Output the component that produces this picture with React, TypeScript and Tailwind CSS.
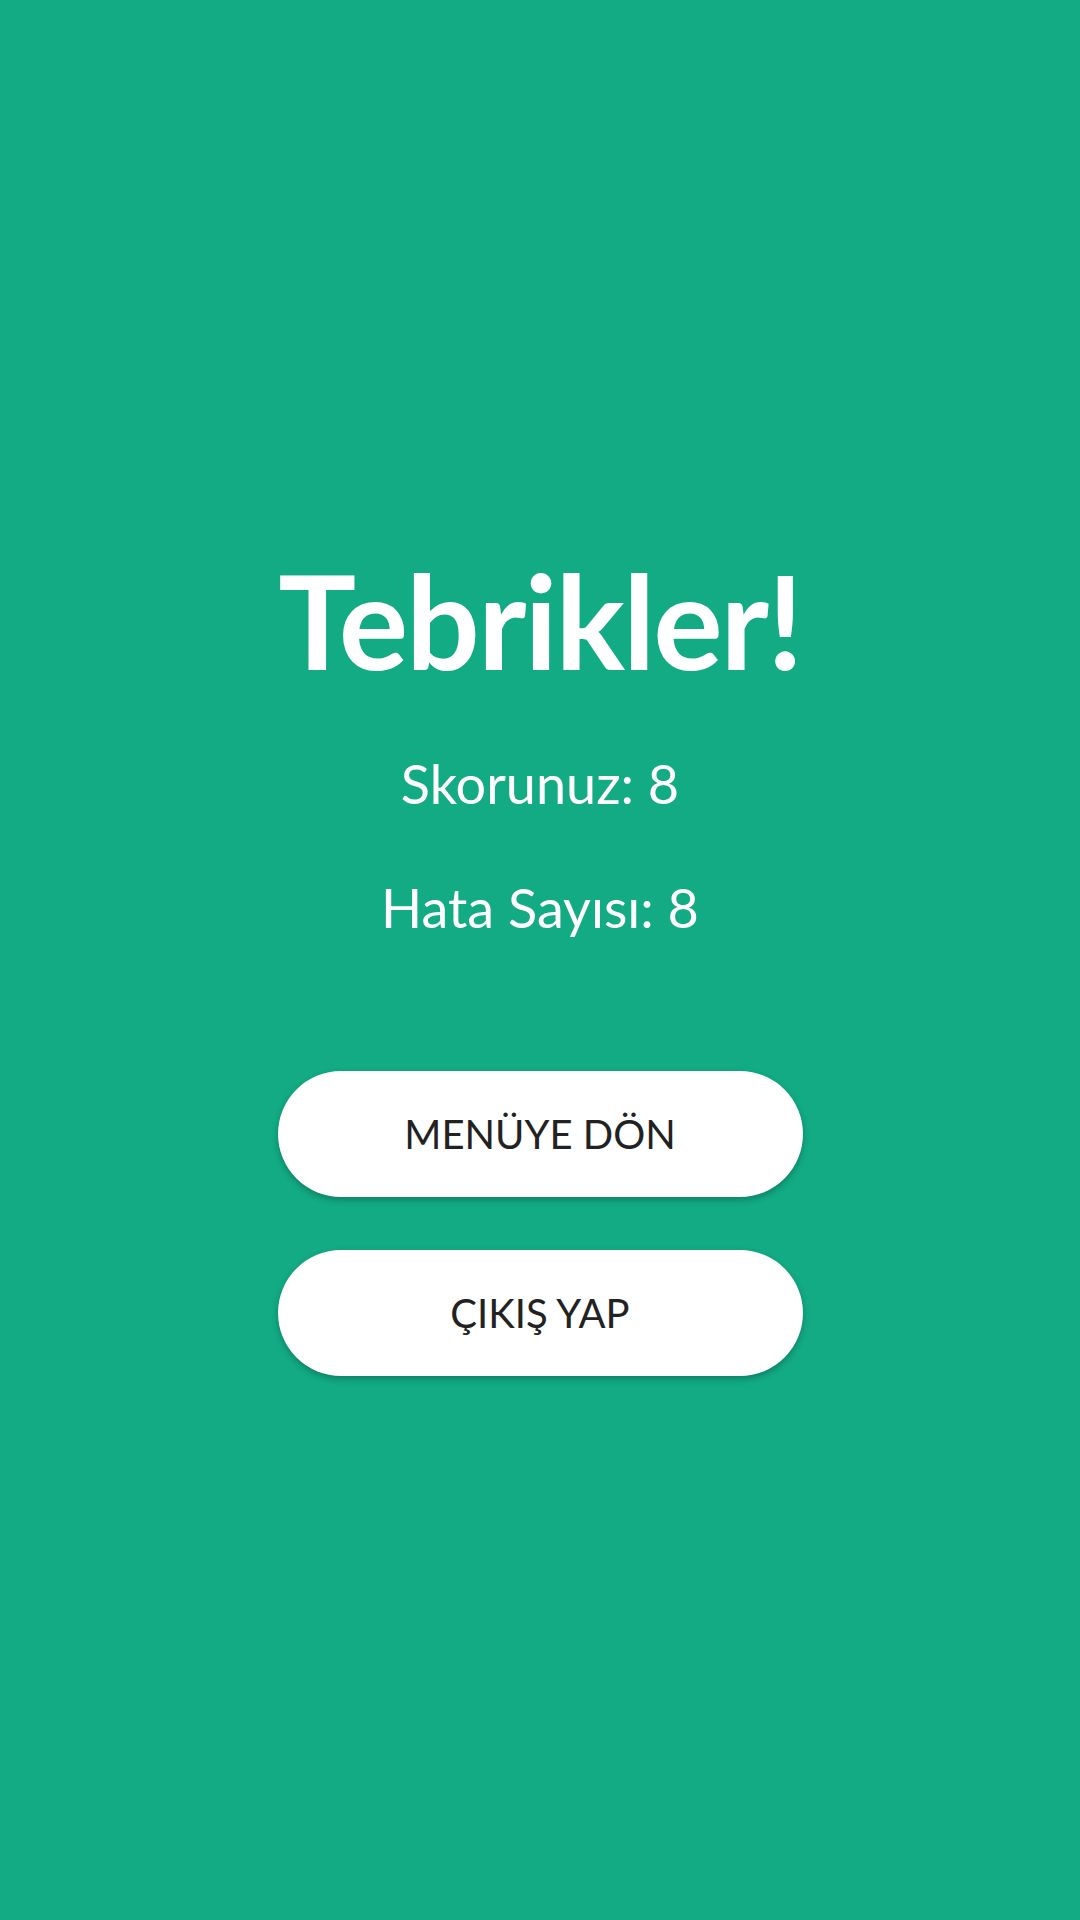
export default function App() {
  return (
    <div
      className="min-h-screen w-full bg-[#12ab84] flex flex-col items-center pt-[555px]"
      style={{ fontFamily: 'Lato, "Open Sans", sans-serif' }}
    >
      <h1 className="text-white text-[130px] leading-none font-bold tracking-[-2px]">Tebrikler!</h1>
      <p className="mt-[72px] text-white text-[54px] leading-none">Skorunuz: 8</p>
      <p className="mt-[70px] text-white text-[54px] leading-none">Hata Sayısı: 8</p>

      <div className="mt-[136px] flex flex-col gap-[53px]">
        <button className="w-[525px] h-[126px] rounded-full bg-white text-[#222] text-[40px] shadow-[0_3px_6px_rgba(0,0,0,0.25)]">
          MENÜYE DÖN
        </button>
        <button className="w-[525px] h-[126px] rounded-full bg-white text-[#222] text-[40px] shadow-[0_3px_6px_rgba(0,0,0,0.25)]">
          ÇIKIŞ YAP
        </button>
      </div>
    </div>
  );
}
